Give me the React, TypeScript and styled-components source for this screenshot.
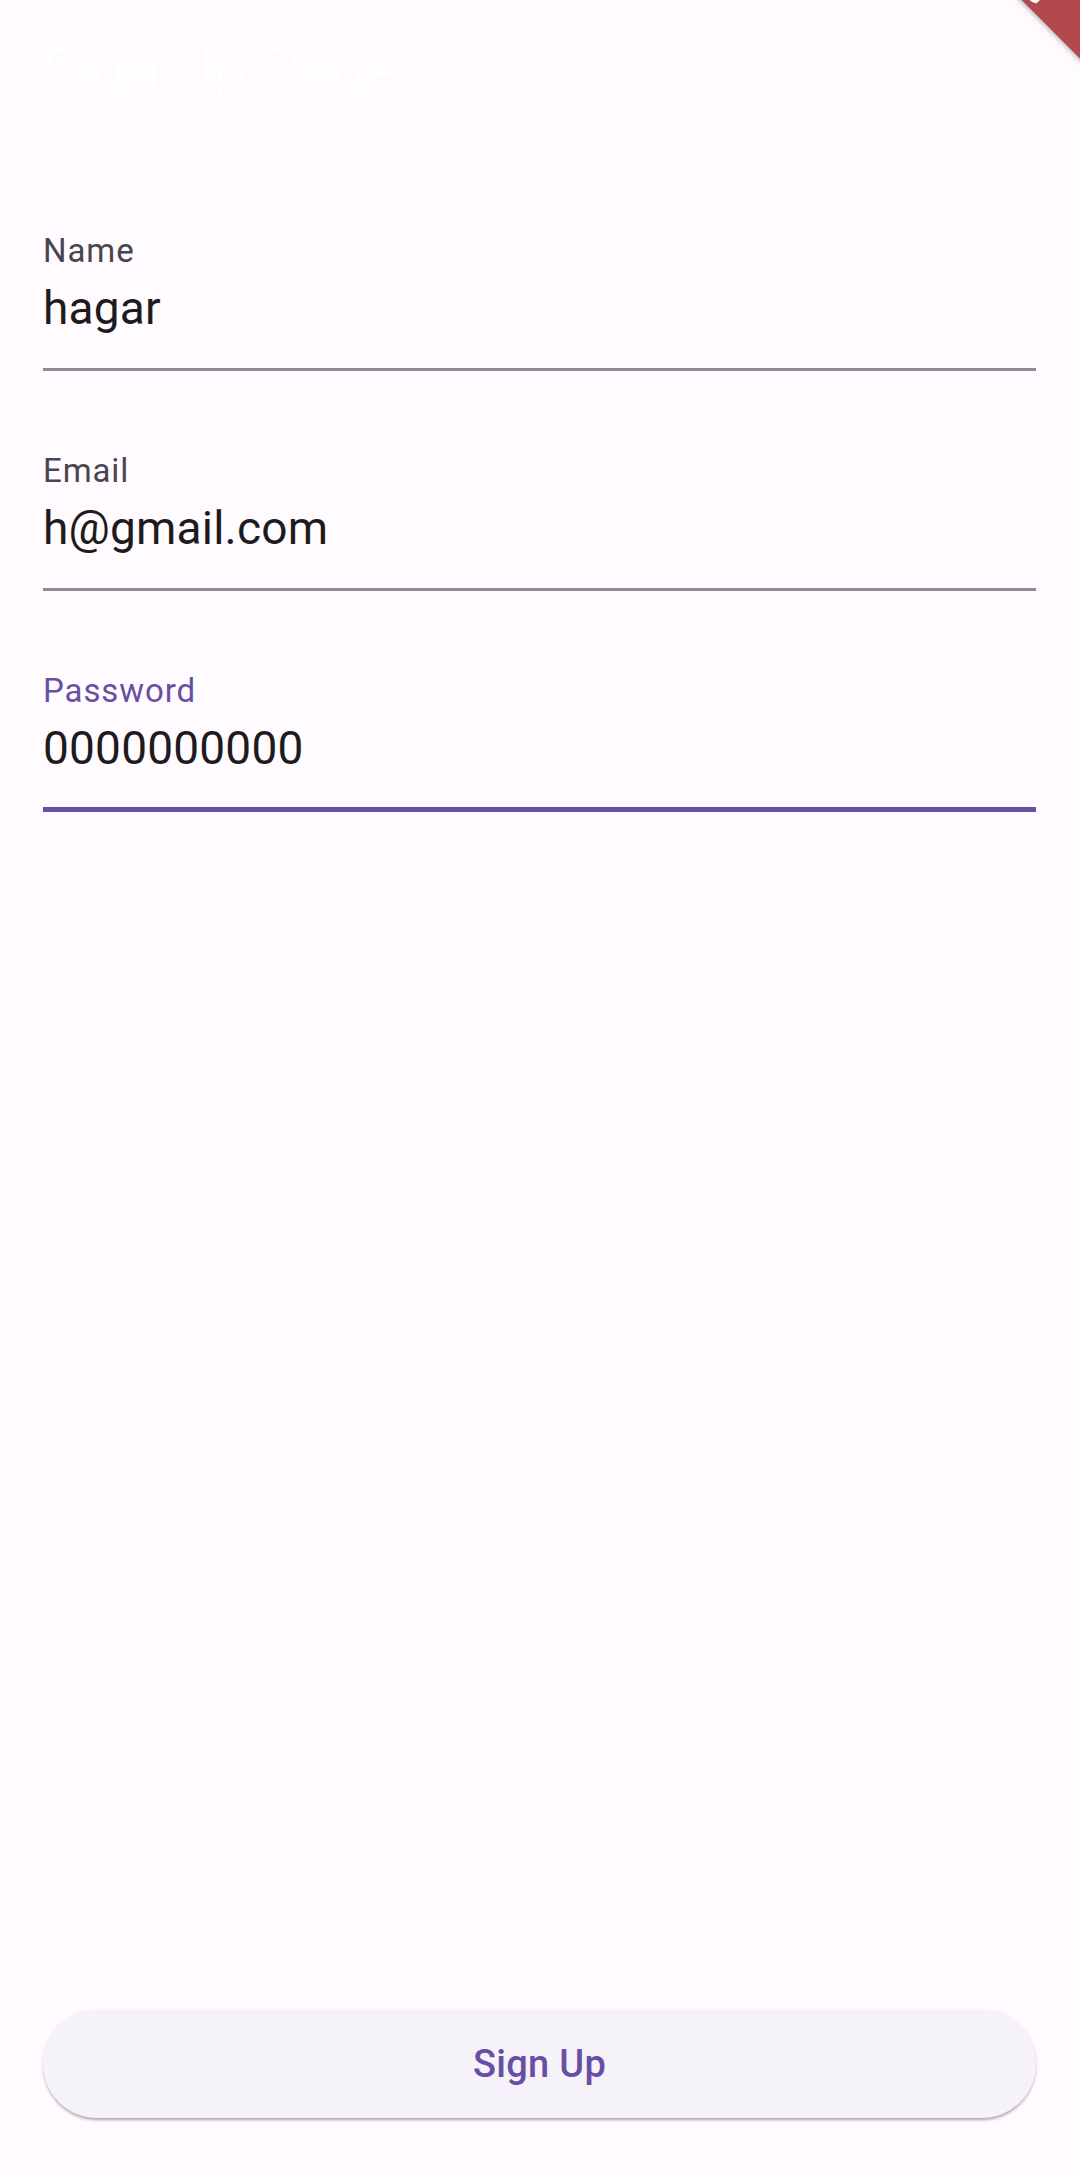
import styled, { createGlobalStyle } from "styled-components";

const GlobalStyle = createGlobalStyle`
  html, body {
    margin: 0;
    padding: 0;
    background: #fffbfe;
  }
  body {
    font-family: Roboto, "Noto Sans", "Liberation Sans", sans-serif;
  }
`;

const Page = styled.div`
  position: relative;
  display: flex;
  flex-direction: column;
  min-height: 2170px;
  background: #fffbfe;
  overflow: hidden;
`;

const AppBar = styled.header`
  padding: 36px 42px 0 42px;
`;

const Title = styled.h1`
  margin: 0;
  font-size: 60px;
  font-weight: 400;
  line-height: 68px;
  color: #ffffff;
`;

const Form = styled.div`
  flex: 1;
  display: flex;
  flex-direction: column;
  gap: 80px;
  padding: 127px 44px 0 43px;
`;

const FieldBox = styled.div<{ $focused?: boolean }>`
  display: flex;
  flex-direction: column;
  gap: 9px;
  padding-bottom: ${(p) => (p.$focused ? "31px" : "32px")};
  border-bottom: ${(p) => (p.$focused ? "5px solid #6750a4" : "3px solid #8f8b94")};
`;

const Label = styled.div<{ $focused?: boolean }>`
  font-size: 33px;
  line-height: 40px;
  letter-spacing: 0.9px;
  color: ${(p) => (p.$focused ? "#6750a4" : "#49454f")};
`;

const Value = styled.div`
  font-size: 46px;
  line-height: 56px;
  letter-spacing: 0.2px;
  color: #1d1b20;
`;

const Footer = styled.div`
  padding: 0 44px 52px 43px;
`;

const SignUpButton = styled.button`
  display: flex;
  align-items: center;
  justify-content: center;
  width: 100%;
  height: 108px;
  border: none;
  border-radius: 54px;
  background: #f6f2fa;
  color: #6750a4;
  font-family: Roboto, "Noto Sans", sans-serif;
  font-size: 38px;
  font-weight: 500;
  letter-spacing: 0.3px;
  box-shadow: 0 3px 3px -1px rgba(0, 0, 0, 0.28), 0 1px 4px rgba(0, 0, 0, 0.1);
  cursor: pointer;
`;

// flutter debug ribbon, mostly cut off by the top edge
const DebugBanner = styled.div`
  position: absolute;
  top: 0;
  right: 0;
  width: 200px;
  height: 200px;
  overflow: hidden;
  pointer-events: none;
`;

const Ribbon = styled.div`
  position: absolute;
  left: 42px;
  top: -22px;
  width: 300px;
  height: 60px;
  box-sizing: border-box;
  display: flex;
  justify-content: flex-end;
  align-items: flex-end;
  padding: 0 176px 2px 0;
  transform: rotate(45deg);
  background: #b3494e;
  box-shadow: 0 0 6px rgba(0, 0, 0, 0.45);
  color: #ffffff;
  font-size: 26px;
  font-weight: 700;
  line-height: 26px;
  letter-spacing: 1px;
`;

const fields = [
  { label: "Name", value: "hagar" },
  { label: "Email", value: "h@gmail.com" },
  { label: "Password", value: "0000000000", focused: true },
];

const Field: React.FC<{ label: string; value: string; focused?: boolean }> = ({
  label,
  value,
  focused,
}) => (
  <FieldBox $focused={focused}>
    <Label $focused={focused}>{label}</Label>
    <Value>{value}</Value>
  </FieldBox>
);

const App: React.FC = () => {
  return (
    <Page>
      <GlobalStyle />
      <AppBar>
        <Title>Sign Up Page</Title>
      </AppBar>
      <Form>
        {fields.map((f) => (
          <Field key={f.label} label={f.label} value={f.value} focused={f.focused} />
        ))}
      </Form>
      <Footer>
        <SignUpButton>Sign Up</SignUpButton>
      </Footer>
      <DebugBanner>
        <Ribbon>DEBUG</Ribbon>
      </DebugBanner>
    </Page>
  );
};

export default App;
